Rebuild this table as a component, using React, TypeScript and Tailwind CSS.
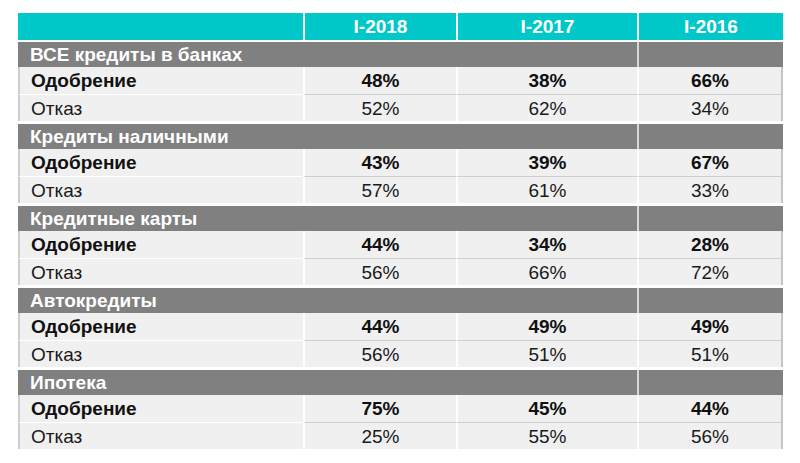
const years = ["I-2018", "I-2017", "I-2016"];

const groups = [
  { title: "ВСЕ кредиты в банках", yes: ["48%", "38%", "66%"], no: ["52%", "62%", "34%"] },
  { title: "Кредиты наличными", yes: ["43%", "39%", "67%"], no: ["57%", "61%", "33%"] },
  { title: "Кредитные карты", yes: ["44%", "34%", "28%"], no: ["56%", "66%", "72%"] },
  { title: "Автокредиты", yes: ["44%", "49%", "49%"], no: ["56%", "51%", "51%"] },
  { title: "Ипотека", yes: ["75%", "45%", "44%"], no: ["25%", "55%", "56%"] },
];

const grid = "grid grid-cols-[285px_153px_181px_146px]";

export default function App() {
  return (
    <div className="w-[800px] h-[463px] bg-white font-['Liberation_Sans',Arial,sans-serif] text-[19px] leading-none overflow-hidden">
      <div className="ml-[18px] pt-[13px] w-[765px]">
        {/* header */}
        <div className={`${grid} h-[27px] bg-[#00c8c9] text-white font-bold`}>
          <div />
          {years.map((y) => (
            <div key={y} className="border-l-2 border-white flex items-center justify-center">
              {y}
            </div>
          ))}
        </div>

        <div className="mt-[2px] flex flex-col gap-[3px]">
          {groups.map((g) => (
            <div key={g.title}>
              {/* section title */}
              <div className={`${grid} h-[25px] bg-[#808080] text-white font-bold`}>
                <div className="col-span-3 flex items-center pl-[12px]">{g.title}</div>
                <div className="border-l-2 border-[#d6d6d6]" />
              </div>

              {/* approve */}
              <div className={`${grid} h-[28px] bg-[#f0f0f0] font-bold text-[#111]`}>
                <div className="border-l-2 border-[#cdcdcd] border-b border-b-white flex items-center pl-[11px]">
                  Одобрение
                </div>
                {g.yes.map((v, i) => (
                  <div
                    key={i}
                    className={`border-l-2 border-white border-b border-b-[#cfcfcf] flex items-center justify-center ${
                      i === 2 ? "border-r-2 border-r-[#c4c4c4]" : ""
                    }`}
                  >
                    {v}
                  </div>
                ))}
              </div>

              {/* reject */}
              <div className={`${grid} h-[26px] bg-[#f0f0f0] text-[#1a1a1a]`}>
                <div className="border-l-2 border-[#cdcdcd] flex items-center pl-[11px]">Отказ</div>
                {g.no.map((v, i) => (
                  <div
                    key={i}
                    className={`border-l-2 border-white flex items-center justify-center ${
                      i === 2 ? "border-r-2 border-r-[#c4c4c4]" : ""
                    }`}
                  >
                    {v}
                  </div>
                ))}
              </div>
            </div>
          ))}
        </div>
      </div>
    </div>
  );
}
